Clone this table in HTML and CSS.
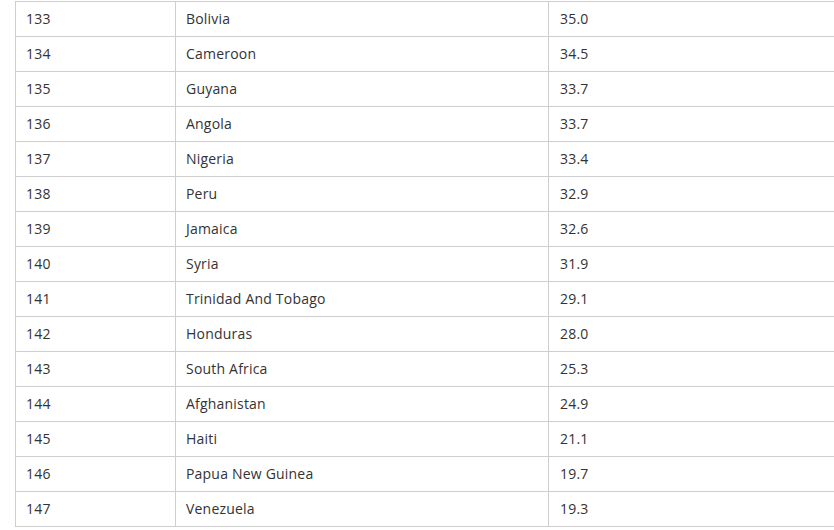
FILE: index.html
```html
<!DOCTYPE html>
<html>
<head>
<meta charset="utf-8">
<link rel="stylesheet" href="styles.css">
</head>
<body>
<table class="tbl">
<colgroup><col class="c1"><col class="c2"><col class="c3"></colgroup>
<tbody>
<tr><td>133</td><td>Bolivia</td><td>35.0</td></tr>
<tr><td>134</td><td>Cameroon</td><td>34.5</td></tr>
<tr><td>135</td><td>Guyana</td><td>33.7</td></tr>
<tr><td>136</td><td>Angola</td><td>33.7</td></tr>
<tr><td>137</td><td>Nigeria</td><td>33.4</td></tr>
<tr><td>138</td><td>Peru</td><td>32.9</td></tr>
<tr><td>139</td><td>Jamaica</td><td>32.6</td></tr>
<tr><td>140</td><td>Syria</td><td>31.9</td></tr>
<tr><td>141</td><td>Trinidad And Tobago</td><td>29.1</td></tr>
<tr><td>142</td><td>Honduras</td><td>28.0</td></tr>
<tr><td>143</td><td>South Africa</td><td>25.3</td></tr>
<tr><td>144</td><td>Afghanistan</td><td>24.9</td></tr>
<tr><td>145</td><td>Haiti</td><td>21.1</td></tr>
<tr><td>146</td><td>Papua New Guinea</td><td>19.7</td></tr>
<tr><td>147</td><td>Venezuela</td><td>19.3</td></tr>
</tbody>
</table>
</body>
</html>
```
FILE: styles.css
```css
html, body {
  margin: 0;
  padding: 0;
  background: #fff;
}
body {
  padding: 1px 0 0 15px;
  font-family: "Open Sans", "Noto Sans", sans-serif;
  font-size: 14px;
  letter-spacing: 0.2px;
  color: #333;
}
.tbl {
  border-collapse: collapse;
  table-layout: fixed;
  width: 819px;
}
.c1 { width: 160px; }
.c2 { width: 373px; }
.c3 { width: 286px; }
.tbl td {
  border: 1px solid #cfcfcf;
  height: 35px;
  padding: 0 10px;
  box-sizing: border-box;
  vertical-align: middle;
  line-height: 20px;
}
.tbl td:nth-child(3) { padding-left: 11px; }
```
